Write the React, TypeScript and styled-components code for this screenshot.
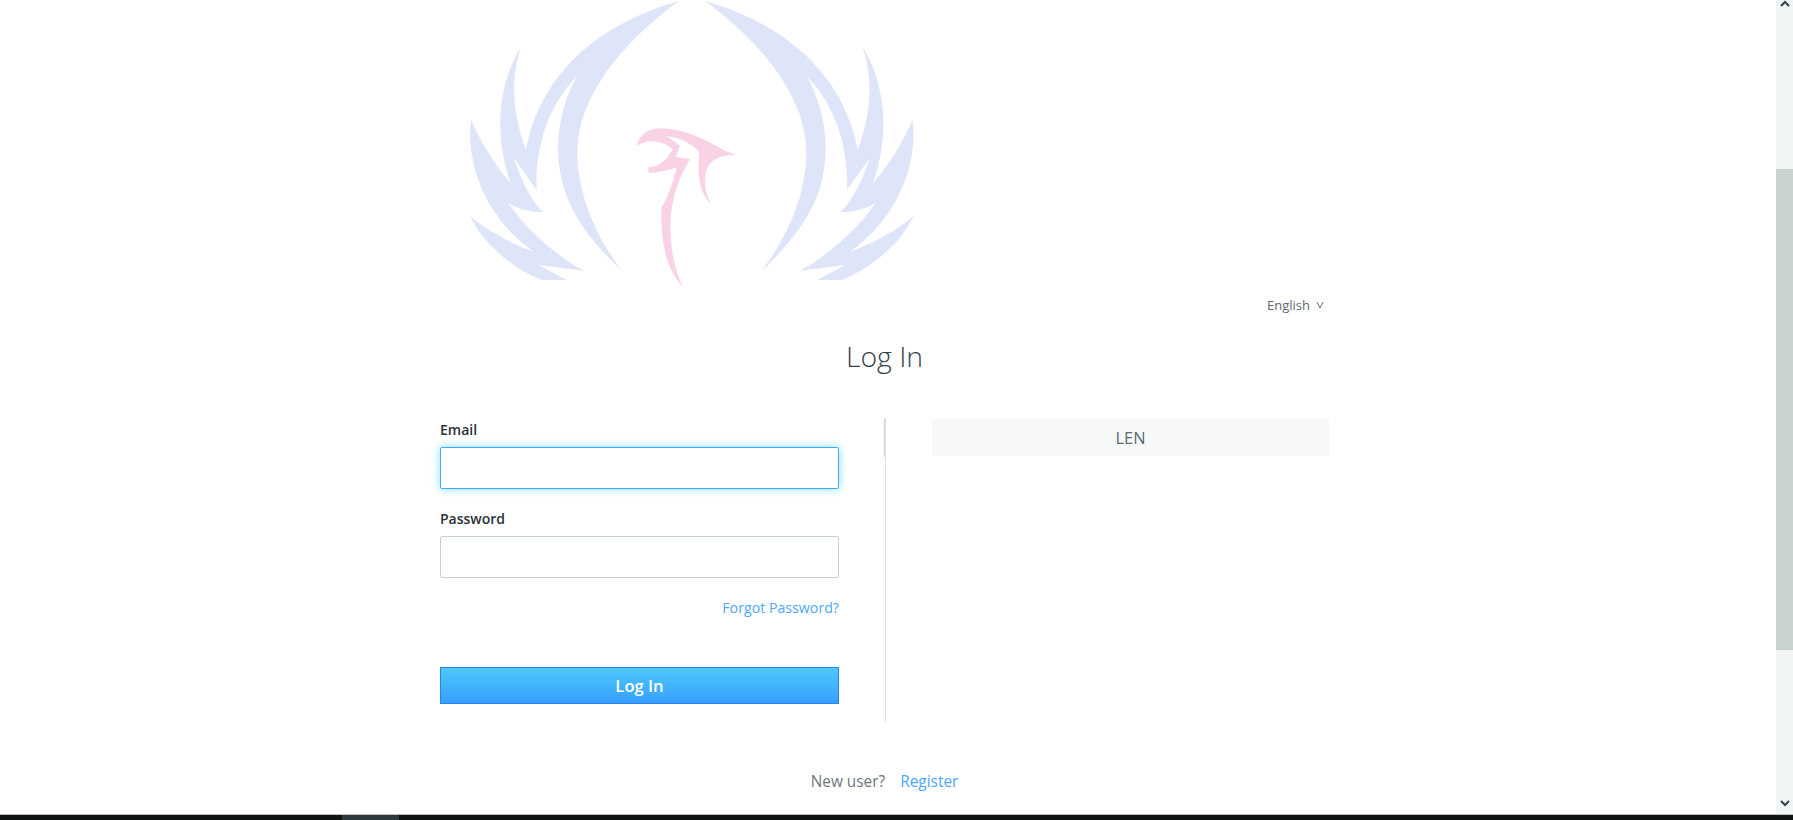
import React from 'react';
import styled, { createGlobalStyle } from 'styled-components';

const GlobalStyle = createGlobalStyle`
    html, body {
        margin: 0;
        padding: 0;
        height: 100%;
        overflow: hidden;
        background: #ffffff;
        font-family: "Open Sans", "Liberation Sans", sans-serif;
    }
    * {
        box-sizing: border-box;
    }
`;

const Screen = styled.div`
    display: flex;
    flex-direction: column;
    height: 820px;
`;

const Viewport = styled.div`
    flex: 1;
    display: flex;
    min-height: 0;
`;

const Page = styled.main`
    flex: 1;
    padding-left: 440px;
`;

const Container = styled.div`
    width: 889px;
`;

const LogoRow = styled.div`
    height: 295px;
    overflow: hidden;
`;

const LangRow = styled.div`
    display: flex;
    justify-content: flex-end;
    align-items: center;
    gap: 6px;
    height: 20px;
    padding-right: 5px;
    font-size: 13px;
    color: #5f6772;
`;

const Title = styled.h1`
    margin: 19px 0 0;
    height: 44px;
    line-height: 44px;
    text-align: center;
    font-size: 28.4px;
    font-weight: 300;
    color: #36424c;
`;

const Columns = styled.div`
    display: grid;
    grid-template-columns: 399px 93px 397px;
    margin-top: 39px;
    height: 305px;
`;

const Form = styled.form`
    display: flex;
    flex-direction: column;
`;

const Label = styled.label<{ $first?: boolean }>`
    display: block;
    height: 20px;
    margin: ${(props) => (props.$first ? '3px 0 7px' : '20px 0 7px')};
    line-height: 20px;
    font-size: 14px;
    font-weight: 600;
    color: #2a3038;
`;

const Input = styled.input<{ $focused?: boolean }>`
    display: block;
    width: 100%;
    height: 42px;
    border-radius: 2px;
    outline: none;
    background: #ffffff;
    border: 1px solid ${(props) => (props.$focused ? '#45a6fb' : '#c5d2d0')};
    box-shadow: ${(props) => (props.$focused ? '0 0 10px #86dfff' : 'none')};
`;

const Forgot = styled.a`
    align-self: flex-end;
    height: 20px;
    margin-top: 20px;
    line-height: 20px;
    font-size: 14.2px;
    color: #4ea8f8;
`;

const SubmitButton = styled.button`
    height: 37px;
    margin-top: 49px;
    border: 1px solid #2a84e6;
    border-radius: 0;
    background: linear-gradient(to bottom, #4fc8ff, #359ffc);
    color: #ffffff;
    font-family: inherit;
    font-size: 16.6px;
    font-weight: 600;
`;

const Divider = styled.div`
    width: 2px;
    margin: 1px 0 0 45px;
    background:
        linear-gradient(#c9d5d6, #c9d5d6) left top / 1px 39px no-repeat,
        linear-gradient(#dbe6e9, #dbe6e9) right top / 1px 100% no-repeat;
`;

const Providers = styled.div`
    display: flex;
    flex-direction: column;
`;

const Provider = styled.div`
    display: flex;
    justify-content: center;
    align-items: center;
    height: 37px;
    margin-top: 2px;
    background: #f7f9f9;
    font-size: 16.4px;
    color: #5a6a76;
`;

const Footer = styled.div`
    display: flex;
    justify-content: center;
    gap: 15px;
    margin-top: 50px;
    line-height: 20px;
    font-size: 15.4px;
    color: #6d7780;
`;

const FooterLink = styled.a`
    color: #4ea8f8;
`;

const Scrollbar = styled.div`
    display: flex;
    flex-direction: column;
    width: 17px;
    background: #f1f5f4;
`;

const ScrollArrow = styled.div<{ $height: number }>`
    display: flex;
    justify-content: center;
    align-items: flex-start;
    height: ${(props) => props.$height}px;
    color: #36444a;
`;

const ScrollSpace = styled.div<{ $height?: number }>`
    flex: ${(props) => (props.$height ? `0 0 ${props.$height}px` : '1')};
`;

const ScrollThumb = styled.div`
    height: 481px;
    background: #c8d2d0;
`;

const Taskbar = styled.div`
    display: flex;
    height: 6px;
    padding-left: 342px;
    background: #0f1414;
    border-top: 1px solid #b9bdbd;
`;

const TaskItem = styled.div`
    width: 57px;
    background: #2f3a3f;
`;

const wingPath =
    'M243 140 C175 250 160 400 212 550 C160 490 120 420 93 360 C75 520 160 670 280 755 ' +
    'C210 730 140 690 90 648 C130 730 210 800 305 840 L380 840 L295 795 L430 812 ' +
    'C340 760 260 690 205 610 C240 630 275 637 310 637 C270 600 240 530 222 475 L290 570 ' +
    'C285 450 320 320 410 230 C360 320 340 430 365 540 C390 650 470 740 548 815 ' +
    'C460 700 410 570 412 450 C415 300 530 140 716 3 C480 70 300 220 258 450 C225 360 205 260 243 140 Z';

const birdPath =
    'M590 438 C600 400 630 385 660 385 C730 385 800 420 850 450 L888 465 C840 465 805 480 797 520 ' +
    'C790 560 800 590 815 612 C785 590 768 530 778 458 C760 430 720 415 680 408 L720 437 L708 470 L750 478 ' +
    'C715 535 692 600 691 680 C692 760 708 820 730 862 C680 810 660 730 665 622 C690 580 700 540 710 503 ' +
    'C680 510 650 520 625 518 L625 502 C660 500 680 480 698 448 C670 420 620 415 590 438 Z';

const Logo: React.FC = () => (
    <svg width="520" height="300" viewBox="0 0 1560 900" aria-label="logo">
        <path d={wingPath} fill="#dfe5f8" />
        <path d={wingPath} fill="#dfe5f8" transform="translate(1511 0) scale(-1 1)" />
        <path d={birdPath} fill="#f9d2e6" />
    </svg>
);

const SmallChevron: React.FC = () => (
    <svg width="8" height="8" viewBox="0 0 8 8">
        <path d="M1 1 L4 7 L7 1" fill="none" stroke="#5f6772" strokeWidth="1" />
    </svg>
);

const ArrowIcon: React.FC<{ up?: boolean }> = ({ up }) => (
    <svg width="10" height="7" viewBox="0 0 10 7">
        <path d={up ? 'M1 6 L5 2 L9 6' : 'M1 1 L5 5 L9 1'} fill="none" stroke="currentColor" strokeWidth="2" />
    </svg>
);

const App: React.FC = () => {
    return (
        <Screen>
            <GlobalStyle />
            <Viewport>
                <Page>
                    <Container>
                        <LogoRow>
                            <Logo />
                        </LogoRow>
                        <LangRow>
                            English <SmallChevron />
                        </LangRow>
                        <Title>Log In</Title>
                        <Columns>
                            <Form>
                                <Label $first>Email</Label>
                                <Input type="text" $focused />
                                <Label>Password</Label>
                                <Input type="password" />
                                <Forgot>Forgot Password?</Forgot>
                                <SubmitButton type="button">Log In</SubmitButton>
                            </Form>
                            <Divider />
                            <Providers>
                                <Provider>LEN</Provider>
                            </Providers>
                        </Columns>
                        <Footer>
                            <span>New user?</span>
                            <FooterLink>Register</FooterLink>
                        </Footer>
                    </Container>
                </Page>
                <Scrollbar>
                    <ScrollArrow $height={6}>
                        <ArrowIcon up />
                    </ScrollArrow>
                    <ScrollSpace $height={163} />
                    <ScrollThumb />
                    <ScrollSpace />
                    <ScrollArrow $height={14}>
                        <ArrowIcon />
                    </ScrollArrow>
                </Scrollbar>
            </Viewport>
            <Taskbar>
                <TaskItem />
            </Taskbar>
        </Screen>
    );
};

export default App;
